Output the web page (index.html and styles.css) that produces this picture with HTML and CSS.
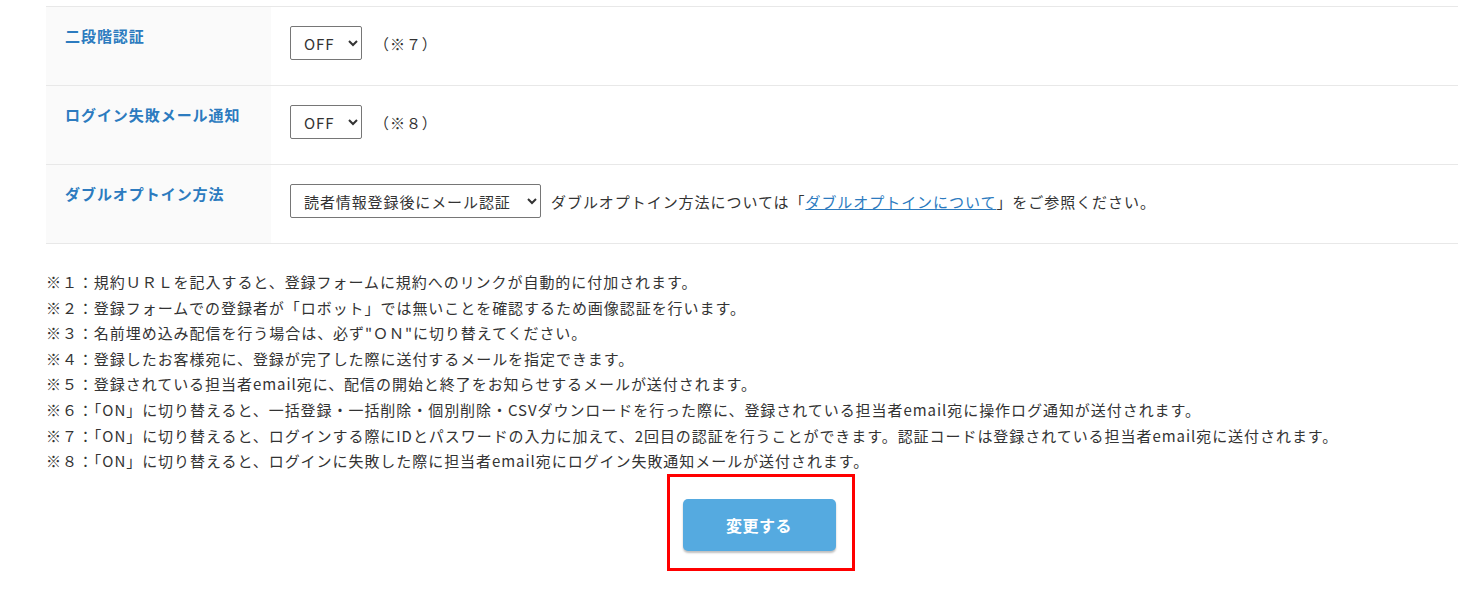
FILE: index.html
```html
<!DOCTYPE html>
<html>
<head>
<meta charset="utf-8">
<link rel="stylesheet" href="styles.css">
</head>
<body>
<div class="page">
  <table class="settings">
    <tr>
      <th>二段階認証</th>
      <td>
        <div class="field">
          <select class="sel-small"><option>OFF</option><option>ON</option></select>
          <span class="note-ref">（※７）</span>
        </div>
      </td>
    </tr>
    <tr>
      <th>ログイン失敗メール通知</th>
      <td>
        <div class="field">
          <select class="sel-small"><option>OFF</option><option>ON</option></select>
          <span class="note-ref">（※８）</span>
        </div>
      </td>
    </tr>
    <tr>
      <th>ダブルオプトイン方法</th>
      <td>
        <div class="field">
          <select class="sel-wide"><option>読者情報登録後にメール認証</option></select>
          <span class="note-text">ダブルオプトイン方法については「<a href="#">ダブルオプトインについて</a>」をご参照ください。</span>
        </div>
      </td>
    </tr>
  </table>

  <!-- notes -->
  <div class="notes">
    <p>※１：規約ＵＲＬを記入すると、登録フォームに規約へのリンクが自動的に付加されます。</p>
    <p>※２：登録フォームでの登録者が「ロボット」では無いことを確認するため画像認証を行います。</p>
    <p>※３：名前埋め込み配信を行う場合は、必ず"ＯＮ"に切り替えてください。</p>
    <p>※４：登録したお客様宛に、登録が完了した際に送付するメールを指定できます。</p>
    <p>※５：登録されている担当者email宛に、配信の開始と終了をお知らせするメールが送付されます。</p>
    <p>※６：「ON」に切り替えると、一括登録・一括削除・個別削除・CSVダウンロードを行った際に、登録されている担当者email宛に操作ログ通知が送付されます。</p>
    <p>※７：「ON」に切り替えると、ログインする際にIDとパスワードの入力に加えて、2回目の認証を行うことができます。認証コードは登録されている担当者email宛に送付されます。</p>
    <p>※８：「ON」に切り替えると、ログインに失敗した際に担当者email宛にログイン失敗通知メールが送付されます。</p>
  </div>

  <div class="submit-row">
    <div class="highlight">
      <button class="btn-submit">変更する</button>
    </div>
  </div>
</div>
</body>
</html>
```

FILE: styles.css
```css
body {
  margin: 0;
  overflow: hidden;
  font-family: "Noto Sans CJK JP", "Noto Sans", sans-serif;
  font-size: 15px;
  letter-spacing: 0.95px;
  color: #333;
  background-color: #fff;
}

.page {
  width: 1427px;
  margin-left: 46px;
}

/* settings table */
.settings {
  width: 100%;
  border-collapse: collapse;
  margin-top: 6px;
}

.settings th,
.settings td {
  border-top: 1px solid #e8e8e8;
  border-bottom: 1px solid #e8e8e8;
  padding: 19px 19px 25px;
  vertical-align: top;
}

.settings th {
  width: 187px;
  text-align: left;
  background-color: #fafafa;
  color: #2c7bbf;
  font-weight: bold;
  line-height: 21px;
  padding-top: 18px;
}

.field {
  display: flex;
  align-items: center;
  height: 34px;
}

select {
  font-family: "Noto Sans CJK JP", "Noto Sans", sans-serif;
  font-size: 15px;
  letter-spacing: 0.9px;
  color: #333;
  height: 34px;
  border: 1px solid #767676;
  border-radius: 2px;
  background-color: #fff;
  padding: 0 4px 0 9px;
}

.sel-small {
  width: 72px;
}

.sel-wide {
  width: 251px;
}

.note-ref {
  margin-left: 12px;
}

.note-text {
  margin-left: 10px;
}

.note-text a {
  color: #2c7bbf;
}

/* notes */
.notes {
  margin-top: 25px;
}

.notes p {
  margin: 0;
  line-height: 25.6px;
}

/* submit */
.submit-row {
  display: flex;
  justify-content: center;
  margin-top: 0;
  padding-left: 2px;
}

.highlight {
  border: 3px solid #f00;
  padding: 22px 16px 17px 13px;
}

.btn-submit {
  display: block;
  width: 153px;
  height: 52px;
  border: none;
  border-radius: 5px;
  background-color: #55aae0;
  color: #fff;
  font-family: "Noto Sans CJK JP", "Noto Sans", sans-serif;
  font-size: 16px;
  letter-spacing: 0.5px;
  font-weight: bold;
  box-shadow: 0 2px 2px rgba(0,0,0,0.25);
  cursor: pointer;
}
```
